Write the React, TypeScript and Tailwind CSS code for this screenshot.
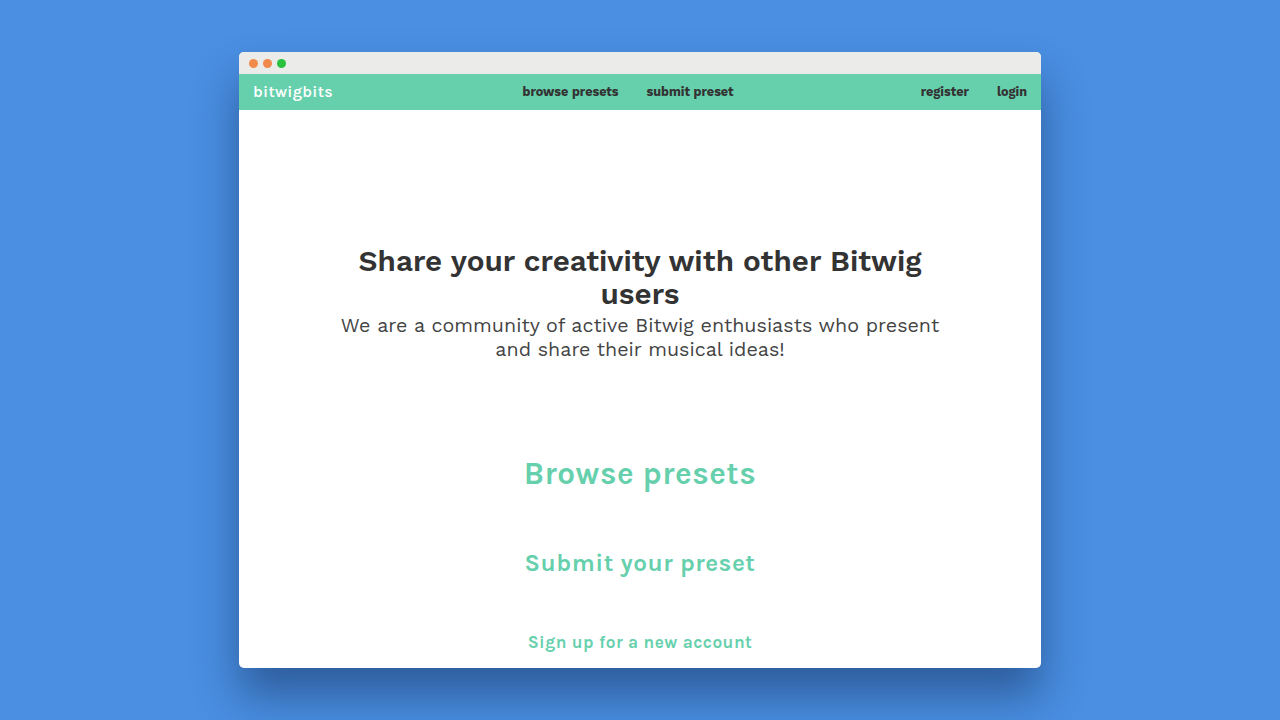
export default function App() {
  return (
    <div className="w-[1280px] h-[720px] bg-[#4a8fe2] flex justify-center pt-[52px] overflow-hidden">
      <div
        className="w-[802px] h-[616px] bg-white rounded-[5px] overflow-hidden flex flex-col shadow-[0_28px_45px_rgba(10,30,70,0.45)]"
        style={{ fontFamily: "'Work Sans', Inter, 'Open Sans', sans-serif" }}
      >
        {/* Title bar */}
        <div className="h-[22px] bg-[#ebebe9] flex items-center gap-[5px] pl-[10px] shrink-0">
          <span className="w-[9px] h-[9px] rounded-full bg-[#f18b4a]" />
          <span className="w-[9px] h-[9px] rounded-full bg-[#f0894a]" />
          <span className="w-[9px] h-[9px] rounded-full bg-[#2ac13e]" />
        </div>

        {/* Nav */}
        <nav className="h-[36px] bg-[#66d0ad] flex items-center px-[14px] shrink-0">
          <div className="flex-1 text-white text-[16px] font-semibold tracking-[0.3px]" style={{ fontFamily: "Karla, Lato, sans-serif" }}>
            bitwigbits
          </div>
          <div className="flex gap-[28px] text-[12.6px] font-bold text-[#333] mr-[24px]">
            <span>browse presets</span>
            <span>submit preset</span>
          </div>
          <div className="flex-1 flex justify-end gap-[28px] text-[12.6px] font-bold text-[#333]">
            <span>register</span>
            <span>login</span>
          </div>
        </nav>

        {/* Hero */}
        <main className="flex flex-col items-center text-center">
          <h1 className="mt-[134px] w-[600px] text-[29.6px] leading-[33px] font-semibold text-[#333]">
            Share your creativity with other Bitwig users
          </h1>
          <p className="mt-[4px] w-[610px] text-[19.7px] leading-[24px] text-[#444]">
            We are a community of active Bitwig enthusiasts who present and share their musical ideas!
          </p>

          <a className="mt-[88px] text-[31.4px] font-bold text-[#66d0ad] tracking-[0.5px]" style={{ fontFamily: "Karla, Lato, sans-serif" }}>
            Browse presets
          </a>
          <a className="mt-[48px] text-[24.3px] font-bold text-[#66d0ad] tracking-[0.5px]" style={{ fontFamily: "Karla, Lato, sans-serif" }}>
            Submit your preset
          </a>
          <a className="mt-[48px] text-[17.2px] font-bold text-[#66d0ad] tracking-[0.5px]" style={{ fontFamily: "Karla, Lato, sans-serif" }}>
            Sign up for a new account
          </a>
        </main>
      </div>
    </div>
  );
}
